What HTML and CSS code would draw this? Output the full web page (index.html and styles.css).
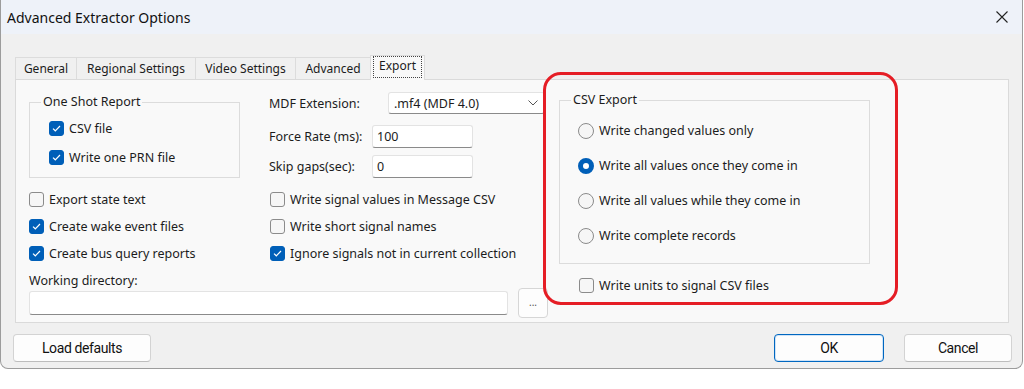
FILE: index.html
```html
<!DOCTYPE html>
<html lang="en">
<head>
  <meta charset="UTF-8" />
  <title>Advanced Extractor Options</title>
  <link rel="stylesheet" href="styles.css">
</head>
<body>

<div class="window">
  <div class="titlebar">
    <span class="title">Advanced Extractor Options</span>
    <svg class="close" width="12" height="12" viewBox="0 0 12 12"><path d="M0.5 0.5L11.5 11.5M11.5 0.5L0.5 11.5" /></svg>
  </div>

  <div class="tabs">
    <div class="tab t-general">General</div>
    <div class="tab t-regional">Regional Settings</div>
    <div class="tab t-video">Video Settings</div>
    <div class="tab t-advanced">Advanced</div>
    <div class="tab active t-export"><span class="focus">Export</span></div>
  </div>

  <div class="page">
    <div class="left">
      <div class="top">
        <fieldset class="group shot">
          <legend>One Shot Report</legend>
          <div class="opt"><span class="box on"><svg width="15" height="15" viewBox="0 0 15 15"><path d="M4 7.6L6.3 9.8L11 5" /></svg></span>CSV file</div>
          <div class="opt"><span class="box on"><svg width="15" height="15" viewBox="0 0 15 15"><path d="M4 7.6L6.3 9.8L11 5" /></svg></span>Write one PRN file</div>
        </fieldset>

        <div class="fields">
          <div class="field">
            <span class="lbl mdf">MDF Extension:</span>
            <div class="select">.mf4 (MDF 4.0)
              <svg width="10" height="6" viewBox="0 0 10 6"><path d="M0.5 0.5L5 5L9.5 0.5" /></svg>
            </div>
          </div>
          <div class="field rate">
            <span class="lbl">Force Rate (ms):</span>
            <div class="input small">100</div>
          </div>
          <div class="field gaps">
            <span class="lbl">Skip gaps(sec):</span>
            <div class="input small">0</div>
          </div>
        </div>
      </div>

      <div class="checks">
        <div class="opt"><span class="box"></span>Export state text</div>
        <div class="opt"><span class="box"></span>Write signal values in Message CSV</div>
        <div class="opt"><span class="box on"><svg width="15" height="15" viewBox="0 0 15 15"><path d="M4 7.6L6.3 9.8L11 5" /></svg></span>Create wake event files</div>
        <div class="opt"><span class="box"></span>Write short signal names</div>
        <div class="opt"><span class="box on"><svg width="15" height="15" viewBox="0 0 15 15"><path d="M4 7.6L6.3 9.8L11 5" /></svg></span>Create bus query reports</div>
        <div class="opt"><span class="box on"><svg width="15" height="15" viewBox="0 0 15 15"><path d="M4 7.6L6.3 9.8L11 5" /></svg></span>Ignore signals not in current collection</div>
      </div>

      <div class="dir-label">Working directory:</div>
      <div class="dir-row">
        <div class="input wide"></div>
        <button class="browse">...</button>
      </div>
    </div>

    <div class="right">
      <fieldset class="group csv">
        <legend>CSV Export</legend>
        <div class="opt radio-row"><span class="radio"></span>Write changed values only</div>
        <div class="opt radio-row"><span class="radio on"></span>Write all values once they come in</div>
        <div class="opt radio-row"><span class="radio"></span>Write all values while they come in</div>
        <div class="opt radio-row"><span class="radio"></span>Write complete records</div>
      </fieldset>
      <div class="opt units"><span class="box"></span>Write units to signal CSV files</div>
    </div>
  </div>

  <div class="actions">
    <button class="btn load">Load defaults</button>
    <button class="btn ok">OK</button>
    <button class="btn cancel">Cancel</button>
  </div>

  <!-- red annotation box drawn over the dialog -->
  <div class="highlight"></div>
</div>

</body>
</html>
```

FILE: styles.css
```css
body {
  margin: 0;
  background-color: #fff;
  font-family: "Noto Sans", sans-serif;
  font-size: 12.5px;
  color: #1c1c1c;
}

.window {
  position: relative;
  width: 1021px;
  height: 368px;
  background-color: #f0f0f0;
  border: 1px solid #9c9c9c;
  border-top: none;
  border-radius: 0 0 8px 8px;
}

.titlebar {
  height: 34px;
  background-color: #eef2f9;
  display: flex;
  align-items: center;
  justify-content: space-between;
  padding: 0 14px 0 6px;
}

.title {
  font-size: 14px;
  color: #111;
}

.close path {
  stroke: #222;
  stroke-width: 1.1;
  fill: none;
}

/* tabs */
.tabs {
  display: flex;
  align-items: flex-end;
  height: 24px;
  margin: 21px 0 0 14px;
  font-size: 12px;
}

.tab {
  height: 22px;
  box-sizing: border-box;
  display: flex;
  align-items: center;
  justify-content: center;
  border: 1px solid #dcdcdc;
  border-bottom: none;
  border-left: none;
  background-color: #f0f0f0;
}

.t-general { width: 62px; border-left: 1px solid #dcdcdc; }
.t-regional { width: 119px; }
.t-video { width: 100px; }
.t-advanced { width: 75px; }

.tab.active {
  width: 55px;
  height: 25px;
  margin-bottom: -1px;
  margin-left: -1px;
  border-left: 1px solid #dcdcdc;
  background-color: #f9f9f9;
  position: relative;
  z-index: 1;
  align-items: flex-start;
}

.focus {
  border: 1px dotted #444;
  padding: 1px 5px 3px;
  line-height: 16px;
}

/* tab page */
.page {
  margin-left: 14px;
  width: 994px;
  height: 244px;
  box-sizing: border-box;
  border: 1px solid #dadada;
  background-color: #f9f9f9;
  padding: 12px 0 0 13px;
  display: flex;
}

.left {
  width: 530px;
}

.top {
  display: grid;
  grid-template-columns: 240px 1fr;
  margin-bottom: 8px;
}

.group {
  margin: 0;
  border: 1px solid #dcdcdc;
  padding: 0 0 0 11px;
}

.group legend {
  padding: 0 2px;
  line-height: 16px;
}

.shot {
  width: 211px;
  box-sizing: border-box;
  margin-top: 2px;
  padding-top: 4px;
  padding-bottom: 2px;
}

.shot .opt {
  height: 29px;
  margin-left: 8px;
}

.opt {
  display: flex;
  align-items: center;
  gap: 5px;
  height: 27px;
  white-space: nowrap;
}

.box {
  width: 15px;
  height: 15px;
  box-sizing: border-box;
  border: 1px solid #8b8b8b;
  border-radius: 3px;
  background-color: #f6f6f6;
  flex-shrink: 0;
}

.box.on {
  background-color: #005fb8;
  border-color: #005fb8;
}

.box svg {
  display: block;
  margin: -1px;
}

.box path {
  stroke: #fff;
  stroke-width: 1.2;
  fill: none;
}

.radio {
  width: 16px;
  height: 16px;
  box-sizing: border-box;
  border: 1px solid #8b8b8b;
  border-radius: 50%;
  background-color: #f6f6f6;
  flex-shrink: 0;
}

.radio.on {
  border: 5px solid #005fb8;
  background-color: #fff;
}

.fields .field {
  display: flex;
  align-items: center;
}

.lbl {
  width: 103px;
}

.lbl.mdf {
  width: 119px;
}

.field.rate {
  margin-top: 11px;
}

.field.gaps {
  margin-top: 7px;
}

.select {
  width: 157px;
  height: 22px;
  box-sizing: border-box;
  background-color: #fff;
  border: 1px solid #e3e3e3;
  border-bottom-color: #8a8a8a;
  border-radius: 3px;
  display: flex;
  align-items: center;
  justify-content: space-between;
  padding: 0 6px 0 5px;
}

.select path {
  stroke: #555;
  stroke-width: 1;
  fill: none;
}

.input {
  height: 23px;
  box-sizing: border-box;
  background-color: #fff;
  border: 1px solid #e3e3e3;
  border-bottom-color: #8a8a8a;
  border-radius: 3px;
  display: flex;
  align-items: center;
  padding-left: 4px;
}

.input.small {
  width: 101px;
}

.checks {
  display: grid;
  grid-template-columns: 240px 1fr;
}

.checks .opt:nth-child(even) {
  margin-left: 1px;
}

.dir-label {
  margin-top: 6px;
  line-height: 16px;
}

.dir-row {
  display: flex;
  align-items: center;
  gap: 10px;
  margin-top: -1px;
  height: 30px;
}

.input.wide {
  width: 479px;
  height: 24px;
}

.browse {
  width: 30px;
  height: 30px;
  border: 1px solid #d6d6d6;
  border-radius: 4px;
  background-color: #fdfdfd;
  font-family: "Noto Sans", sans-serif;
  font-size: 10px;
  color: #555;
  padding: 0 0 2px;
}

.right {
  width: 311px;
}

.csv {
  padding-top: 5px;
  padding-bottom: 10px;
}

.radio-row {
  height: 35px;
  margin-left: 7px;
}

.units {
  margin: 8px 0 0 20px;
}

/* bottom buttons */
.actions {
  display: flex;
  align-items: center;
  margin-top: 11px;
  padding: 0 10px 0 12px;
}

.btn {
  height: 28px;
  border: 1px solid #d3d3d3;
  border-bottom-color: #bdbdbd;
  border-radius: 4px;
  background-color: #fdfdfd;
  font-family: Roboto, sans-serif;
  font-size: 14px;
  letter-spacing: -0.4px;
  color: #111;
}

.btn.load {
  width: 138px;
}

.btn.ok {
  width: 110px;
  margin-left: auto;
  border: 1px solid #0067c0;
  box-shadow: inset 0 0 0 1px #cfe3f7;
}

.btn.cancel {
  width: 108px;
  margin-left: 20px;
}

.highlight {
  position: absolute;
  left: 542px;
  top: 72px;
  width: 355px;
  height: 233px;
  box-sizing: border-box;
  border: 3px solid #e51d25;
  border-radius: 18px;
}
```
